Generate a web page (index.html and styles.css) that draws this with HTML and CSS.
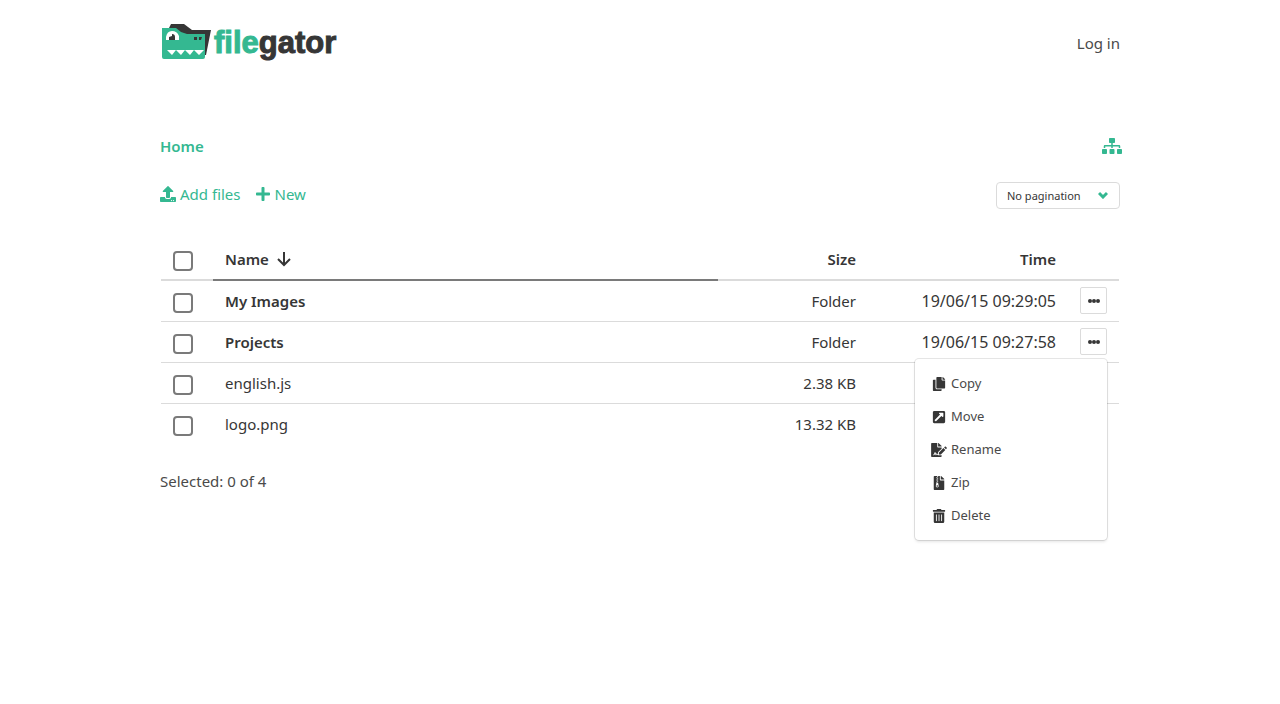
FILE: index.html
```html
<!DOCTYPE html>
<html lang="en">

<head>
    <meta charset="UTF-8">
    <meta name="viewport" content="width=device-width, initial-scale=1.0">
    <title>FileGator</title>
    <link rel="stylesheet" href="styles.css">
</head>

<body>
    <div class="container">
        <header class="navbar">
            <a class="brand" href="#">
                <svg class="brand-icon" viewBox="0 0 50 38" width="50" height="38" aria-hidden="true">
                    <path fill="#363636" d="M7 4 9 0H22L30 6H49L44 31H42V21L20 11H7z" />
                    <path fill="#34b891" d="M0 4H14L19 8 25 10H43V33Q43 35 41 35H2Q0 35 0 33z" />
                    <path fill="#fff" d="M4 16V13Q5 7 10 7Q15 7 17 12V16zM5 26H42L37 31 32 26 28 31 23 26 19 31 14 26 10 31z" />
                    <path fill="#363636" d="M7 16V13L10 12V10Q13 10 13 13V16zM32 13H35V16H32zM37 13H40L39 16H37z" />
                </svg>
                <span class="brand-name"><span class="brand-green">file</span>gator</span>
            </a>
            <a class="login" href="#">Log in</a>
        </header>

        <nav class="breadcrumb">
            <a class="crumb" href="#">Home</a>
            <button class="tree" type="button" aria-label="Folder tree">
                <svg class="icon" viewBox="0 0 640 512" width="20" height="16"><path d="M128 352H32c-17.67 0-32 14.33-32 32v96c0 17.67 14.33 32 32 32h96c17.67 0 32-14.33 32-32v-96c0-17.67-14.33-32-32-32zm-24-80h192v48h48v-48h192v48h48v-57.59c0-21.17-17.23-38.41-38.41-38.41H344v-64h40c17.67 0 32-14.33 32-32V32c0-17.67-14.33-32-32-32H256c-17.67 0-32 14.33-32 32v96c0 17.67 14.33 32 32 32h40v64H94.41C73.23 224 56 241.23 56 262.41V320h48v-48zm264 80h-96c-17.67 0-32 14.33-32 32v96c0 17.67 14.33 32 32 32h96c17.67 0 32-14.33 32-32v-96c0-17.67-14.33-32-32-32zm240 0h-96c-17.67 0-32 14.33-32 32v96c0 17.67 14.33 32 32 32h96c17.67 0 32-14.33 32-32v-96c0-17.67-14.33-32-32-32z" /></svg>
            </button>
        </nav>

        <div class="toolbar">
            <div class="actions">
                <button class="action" type="button">
                    <svg class="icon" viewBox="0 0 512 512" width="16" height="16"><path d="M296 384h-80c-13.3 0-24-10.7-24-24V192h-87.7c-17.8 0-26.7-21.5-14.1-34.1L242.3 5.7c7.5-7.5 19.8-7.5 27.3 0l152.2 152.2c12.6 12.6 3.7 34.1-14.1 34.1H320v168c0 13.3-10.7 24-24 24zm216-8v112c0 13.3-10.7 24-24 24H24c-13.3 0-24-10.7-24-24V376c0-13.3 10.7-24 24-24h136v8c0 30.9 25.1 56 56 56h80c30.9 0 56-25.1 56-56v-8h136c13.3 0 24 10.7 24 24zm-124 88c0-11-9-20-20-20s-20 9-20 20 9 20 20 20 20-9 20-20zm64 0c0-11-9-20-20-20s-20 9-20 20 9 20 20 20 20-9 20-20z" /></svg>
                    Add files
                </button>
                <button class="action" type="button">
                    <svg class="icon" viewBox="0 0 448 512" width="14" height="16"><path d="M416 208H272V64c0-17.67-14.33-32-32-32h-32c-17.67 0-32 14.33-32 32v144H32c-17.67 0-32 14.33-32 32v32c0 17.67 14.33 32 32 32h144v144c0 17.67 14.33 32 32 32h32c17.67 0 32-14.33 32-32V304h144c17.67 0 32-14.33 32-32v-32c0-17.67-14.33-32-32-32z" /></svg>
                    New
                </button>
            </div>
            <div class="select">
                <select aria-label="Per page">
                    <option>No pagination</option>
                    <option>5 per page</option>
                    <option>10 per page</option>
                    <option>15 per page</option>
                </select>
                <svg class="select-arrow" viewBox="0 0 10 8" width="10" height="8"><path d="M1 2 5 6 9 2" /></svg>
            </div>
        </div>

        <div class="table-wrapper">
            <table class="table">
                <thead>
                    <tr>
                        <th class="col-check"><input class="check" type="checkbox" aria-label="Select all"></th>
                        <th class="col-name sorted">
                            <span class="sort">Name
                                <svg class="sort-arrow" viewBox="0 0 14 16" width="14" height="16"><path d="M7 1V14M1 8 7 14 13 8" /></svg>
                            </span>
                        </th>
                        <th class="col-size">Size</th>
                        <th class="col-time">Time</th>
                        <th class="col-more"></th>
                    </tr>
                </thead>
                <tbody>
                    <tr>
                        <td><input class="check" type="checkbox" aria-label="Select My Images"></td>
                        <td><a class="name folder" href="#">My Images</a></td>
                        <td class="size">Folder</td>
                        <td class="time">19/06/15 09:29:05</td>
                        <td>
                            <div class="dropdown">
                                <button class="more" type="button" aria-label="Actions">
                                    <svg class="icon" viewBox="0 0 12 4" width="12" height="4"><circle cx="2" cy="2" r="2" /><circle cx="6" cy="2" r="2" /><circle cx="10" cy="2" r="2" /></svg>
                                </button>
                            </div>
                        </td>
                    </tr>
                    <tr>
                        <td><input class="check" type="checkbox" aria-label="Select Projects"></td>
                        <td><a class="name folder" href="#">Projects</a></td>
                        <td class="size">Folder</td>
                        <td class="time">19/06/15 09:27:58</td>
                        <td>
                            <div class="dropdown">
                                <button class="more" type="button" aria-label="Actions">
                                    <svg class="icon" viewBox="0 0 12 4" width="12" height="4"><circle cx="2" cy="2" r="2" /><circle cx="6" cy="2" r="2" /><circle cx="10" cy="2" r="2" /></svg>
                                </button>
                                <div class="menu">
                                    <button class="menu-item" type="button">
                                        <svg class="icon" viewBox="0 0 448 512" width="16" height="14"><path d="M320 448v40c0 13.255-10.745 24-24 24H24c-13.255 0-24-10.745-24-24V120c0-13.255 10.745-24 24-24h72v296c0 30.879 25.121 56 56 56h168zm0-344V0H152c-13.255 0-24 10.745-24 24v368c0 13.255 10.745 24 24 24h272c13.255 0 24-10.745 24-24V128H344c-13.2 0-24-10.8-24-24zm120.971-31.029L375.029 7.029A24 24 0 0 0 358.059 0H352v96h96v-6.059a24 24 0 0 0-7.029-16.97z" /></svg>
                                        Copy
                                    </button>
                                    <button class="menu-item" type="button">
                                        <svg class="icon" viewBox="0 0 448 512" width="16" height="14"><path d="M448 80v352c0 26.51-21.49 48-48 48H48c-26.51 0-48-21.49-48-48V80c0-26.51 21.49-48 48-48h352c26.51 0 48 21.49 48 48zm-88 16H248.029c-21.313 0-32.08 25.861-16.971 40.971l31.984 31.987L67.515 364.485c-4.686 4.686-4.686 12.284 0 16.971l31.029 31.029c4.687 4.686 12.285 4.686 16.971 0l195.526-195.526 31.988 31.991C358.058 263.977 384 253.425 384 231.979V120c0-13.255-10.745-24-24-24z" /></svg>
                                        Move
                                    </button>
                                    <button class="menu-item" type="button">
                                        <svg class="icon" viewBox="0 0 576 512" width="16" height="14"><path d="M218.17 424.14c-2.95-5.92-8.09-6.52-10.17-6.52s-7.22.59-10.02 6.19l-7.67 15.34c-6.37 12.78-25.03 11.37-29.48-2.09L144 386.59l-10.61 31.88c-5.89 17.66-22.38 29.53-41 29.53H80c-8.84 0-16-7.16-16-16s7.16-16 16-16h12.39c4.83 0 9.11-3.08 10.64-7.66l18.19-54.64c3.3-9.81 12.44-16.41 22.78-16.41s19.48 6.59 22.77 16.41l13.88 41.64c19.75-16.19 54.06-9.7 66 14.16 1.89 3.78 5.49 5.95 9.36 6.26v-82.12l128-127.09V160H248c-13.2 0-24-10.8-24-24V0H24C10.7 0 0 10.7 0 24v464c0 13.3 10.7 24 24 24h336c13.3 0 24-10.7 24-24v-40l-128-.11c-16.12-.31-30.58-9.28-37.83-23.75zM384 121.9c0-6.3-2.5-12.4-7-16.9L279.1 7c-4.5-4.5-10.6-7-17-7H256v128h128v-6.1zm-96 225.06V416h68.99l161.68-162.78-67.88-67.88L288 346.96zm280.54-179.63l-31.87-31.87c-9.94-9.94-26.07-9.94-36.01 0l-27.25 27.25 67.88 67.88 27.25-27.25c9.95-9.94 9.95-26.07 0-36.01z" /></svg>
                                        Rename
                                    </button>
                                    <button class="menu-item" type="button">
                                        <svg class="icon" viewBox="0 0 384 512" width="16" height="14"><path d="M377 105L279.1 7c-4.5-4.5-10.6-7-17-7H256v128h128v-6.1c0-6.3-2.5-12.4-7-16.9zM128.4 336c-17.9 0-32.4 12.1-32.4 27 0 15 14.6 27 32.5 27s32.4-12.1 32.4-27-14.6-27-32.5-27zM224 136V0h-63.6v32h-32V0H24C10.7 0 0 10.7 0 24v464c0 13.3 10.7 24 24 24h336c13.3 0 24-10.7 24-24V160H248c-13.2 0-24-10.8-24-24zM95.9 32h32v32h-32zm32.3 384c-33.2 0-58-30.4-51.4-62.9L96.4 256v-32h32v-32h-32v-32h32v-32h-32V96h32V64h32v32h-32v32h32v32h-32v32h32v32h-32v32h22.1c5.7 0 10.7 4.1 11.8 9.7l17.3 87.7c6.4 32.4-18.4 62.6-51.4 62.6z" /></svg>
                                        Zip
                                    </button>
                                    <button class="menu-item" type="button">
                                        <svg class="icon" viewBox="0 0 448 512" width="16" height="14"><path d="M32 464a48 48 0 0 0 48 48h288a48 48 0 0 0 48-48V128H32zm272-256a16 16 0 0 1 32 0v224a16 16 0 0 1-32 0zm-96 0a16 16 0 0 1 32 0v224a16 16 0 0 1-32 0zm-96 0a16 16 0 0 1 32 0v224a16 16 0 0 1-32 0zM432 32H312l-9.4-18.7A24 24 0 0 0 281.1 0H166.8a23.72 23.72 0 0 0-21.4 13.3L136 32H16A16 16 0 0 0 0 48v32a16 16 0 0 0 16 16h416a16 16 0 0 0 16-16V48a16 16 0 0 0-16-16z" /></svg>
                                        Delete
                                    </button>
                                </div>
                            </div>
                        </td>
                    </tr>
                    <tr>
                        <td><input class="check" type="checkbox" aria-label="Select english.js"></td>
                        <td><a class="name" href="#">english.js</a></td>
                        <td class="size">2.38 KB</td>
                        <td></td>
                        <td></td>
                    </tr>
                    <tr>
                        <td><input class="check" type="checkbox" aria-label="Select logo.png"></td>
                        <td><a class="name" href="#">logo.png</a></td>
                        <td class="size">13.32 KB</td>
                        <td></td>
                        <td></td>
                    </tr>
                </tbody>
            </table>
        </div>

        <div class="selected">Selected: 0 of 4</div>
    </div>
</body>

</html>
```
FILE: styles.css
```css
* {
    box-sizing: border-box;
}

body {
    margin: 0;
    min-height: 100vh;
    background-color: #fff;
    color: #4a4a4a;
    font-family: "Noto Sans", sans-serif;
    font-size: 15px;
    line-height: 24px;
}

a {
    color: inherit;
    text-decoration: none;
}

button,
select {
    font-family: inherit;
    cursor: pointer;
}

.icon {
    fill: currentColor;
    flex-shrink: 0;
}

.container {
    max-width: 960px;
    margin: 0 auto;
}

.navbar {
    display: flex;
    justify-content: space-between;
    align-items: center;
    height: 86px;
}

.brand {
    display: flex;
    align-items: center;
    gap: 2px;
    padding-left: 2px;
}

.brand-name {
    color: #363636;
    font-family: "Liberation Sans", Arial, sans-serif;
    font-size: 31px;
    font-weight: bold;
    -webkit-text-stroke: 1px currentColor;
}

.brand-green {
    color: #34b891;
}

/* breadcrumb */
.breadcrumb {
    display: flex;
    justify-content: space-between;
    align-items: center;
    margin-top: 48px;
    height: 24px;
    color: #34b891;
}

.crumb {
    font-weight: 600;
}

.tree {
    display: flex;
    margin-right: -2px;
    padding: 0;
    border: 0;
    background: none;
    color: #34b891;
}

/* toolbar */
.toolbar {
    display: flex;
    justify-content: space-between;
    align-items: center;
    margin-top: 24px;
    height: 27px;
}

.actions {
    display: flex;
    gap: 16px;
}

.action {
    display: flex;
    align-items: center;
    gap: 4px;
    padding: 0 0 3px;
    border: 0;
    background: none;
    color: #34b891;
    font-size: 15px;
    line-height: 24px;
}

.select {
    position: relative;
}

.select select {
    display: block;
    width: 124px;
    height: 27px;
    padding: 0 10px;
    border: 1px solid #dbdbdb;
    border-radius: 4px;
    background-color: #fff;
    color: #363636;
    font-size: 11px;
    appearance: none;
}

.select-arrow {
    position: absolute;
    top: 9px;
    right: 12px;
    fill: none;
    stroke: #34b891;
    stroke-width: 3;
    pointer-events: none;
}

/* files */
.table-wrapper {
    margin-top: 30px;
    padding: 0 1px;
}

.table {
    width: 100%;
    table-layout: fixed;
    border-spacing: 0;
    color: #363636;
}

.table th,
.table td {
    height: 41px;
    padding: 0 12px;
    border-bottom: 1px solid #dbdbdb;
    text-align: left;
    vertical-align: middle;
}

.table tbody tr:last-child td {
    height: 40px;
    border-bottom: 0;
}

.table th {
    height: 42px;
    border-bottom: 2px solid #dbdbdb;
    font-weight: 600;
}

.table th.sorted {
    border-bottom-color: #7a7a7a;
}

.table th.col-size,
.table th.col-time,
.table td.size,
.table td.time {
    text-align: right;
}

.table td.time {
    font-size: 16px;
}

.col-check {
    width: 52px;
}

.col-size {
    width: 150px;
}

.col-time {
    width: 200px;
}

.col-more {
    width: 51px;
}

.check {
    display: block;
    width: 20px;
    height: 20px;
    margin: 3px 0 0;
    border: 2px solid #7a7a7a;
    border-radius: 4px;
    background-color: #fff;
    appearance: none;
}

.sort {
    display: flex;
    align-items: center;
    gap: 8px;
}

.sort-arrow {
    fill: none;
    stroke: #363636;
    stroke-width: 2;
}

.folder {
    font-weight: 600;
}

.more {
    display: flex;
    justify-content: center;
    align-items: center;
    width: 27px;
    height: 27px;
    padding: 0;
    border: 1px solid #dbdbdb;
    border-radius: 2px;
    background-color: #fff;
    color: #363636;
}

.dropdown {
    position: relative;
    padding-bottom: 1px;
}

.menu {
    position: absolute;
    top: 100%;
    right: 0;
    z-index: 10;
    width: 192px;
    margin-top: 3px;
    padding: 8px 0;
    border-radius: 4px;
    background-color: #fff;
    box-shadow: 0 2px 3px rgba(10, 10, 10, 0.1), 0 0 0 1px rgba(10, 10, 10, 0.1);
}

.menu-item {
    display: flex;
    align-items: center;
    gap: 4px;
    width: 100%;
    padding: 6px 16px;
    border: 0;
    background: none;
    color: #4a4a4a;
    font-size: 13px;
    line-height: 21px;
}

.menu-item .icon {
    fill: #363636;
}

.selected {
    margin-top: 25px;
}
```
